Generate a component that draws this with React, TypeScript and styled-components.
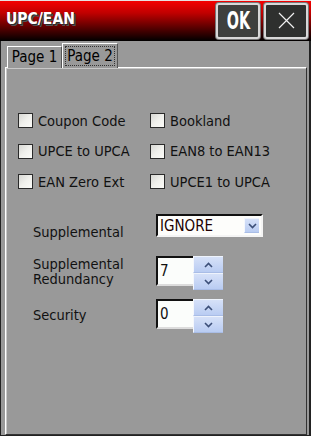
import React from "react";
import styled, { createGlobalStyle } from "styled-components";

const Global = createGlobalStyle`
  html, body { margin: 0; padding: 0; background: #999999; }
  body { font-family: "DejaVu Sans Condensed", "Liberation Sans", sans-serif; }
  #root { width: 311px; height: 436px; }
`;

const Window = styled.div`
  width: 311px;
  height: 436px;
  display: flex;
  flex-direction: column;
  background: #999999;
  overflow: hidden;
`;

const TitleBar = styled.div`
  height: 40px;
  border-top: 1px solid #e6e0e0;
  background: linear-gradient(#f40000 0%, #c00000 30%, #500000 70%, #000000 100%);
  display: flex;
  align-items: center;
  padding: 0 3px 0 6px;
  gap: 4px;
`;

const Title = styled.div`
  flex: 1;
  color: #ffffff;
  font-weight: bold;
  font-size: 15.5px;
  margin-top: -5px;
  text-shadow: 1px 1px 0 #2a2a2a, 2px 2px 0 #555;
`;

const TitleButton = styled.button<{ $dark?: boolean }>`
  width: 44px;
  height: 36px;
  margin-top: -1px;
  padding: 0;
  border: 2px solid #d8d8d8;
  border-radius: 3px;
  box-shadow: 0 0 0 1px #777;
  background: ${(p) => (p.$dark ? "#2e302e" : "#3e403e")};
  display: flex;
  align-items: center;
  justify-content: center;
  color: #ffffff;
`;

const OkText = styled.span`
  font-family: "DejaVu Sans", sans-serif;
  font-weight: bold;
  font-size: 24px;
  display: inline-block;
  transform: scaleX(0.6);
`;

const Body = styled.div`
  flex: 1;
  display: flex;
  flex-direction: column;
  border-left: 1px solid #222;
  border-right: 2px solid #222;
  border-bottom: 1px solid #222;
  padding: 2px 2px 0 4px;
`;

const TabRow = styled.div`
  display: flex;
  align-items: flex-end;
  padding-left: 2px;
  height: 25px;
  margin-bottom: -1px;
  position: relative;
  z-index: 1;
`;

const Tab = styled.div<{ $active?: boolean }>`
  box-sizing: border-box;
  height: ${(p) => (p.$active ? 25 : 22)}px;
  width: ${(p) => (p.$active ? 56 : 55)}px;
  border-top: 1px solid #ffffff;
  border-left: 1px solid #ffffff;
  border-right: 1px solid #555;
  background: #999999;
  font-size: 15px;
  color: #000;
  display: flex;
  align-items: center;
  justify-content: center;
  padding: 2px;
`;

const Focus = styled.div<{ $show?: boolean }>`
  flex: 1;
  align-self: stretch;
  display: flex;
  align-items: center;
  justify-content: center;
  border: 1px dotted ${(p) => (p.$show ? "#333" : "transparent")};
  padding-bottom: 1px;
  white-space: nowrap;
`;

const Pane = styled.div`
  flex: 1;
  border-top: 1px solid #ffffff;
  border-left: 1px solid #ffffff;
  border-right: 1px solid #333;
  border-bottom: 1px solid #333;
  box-shadow: inset 1px 1px 0 #c8c8c8;
  padding: 45px 0 0 12px;
`;

const CheckGrid = styled.div`
  display: grid;
  grid-template-columns: 132px 1fr;
  row-gap: 15.5px;
`;

const CheckItem = styled.label`
  display: flex;
  align-items: center;
  gap: 5px;
  height: 15px;
  font-size: 14.5px;
  color: #111;
  white-space: nowrap;
`;

const Box = styled.span`
  box-sizing: border-box;
  width: 15px;
  height: 15px;
  border: 1px solid #2a2a2a;
  background: linear-gradient(135deg, #d8d8d4 0%, #f0f0ec 50%, #fbfbf8 100%);
`;

const Form = styled.div`
  margin-top: 25px;
  padding-left: 15px;
  display: flex;
  flex-direction: column;
`;

const FormRow = styled.div<{ $gap: number }>`
  display: grid;
  grid-template-columns: 123px auto;
  align-items: start;
  margin-top: ${(p) => p.$gap}px;
`;

const FieldLabel = styled.div<{ $offset: number }>`
  font-size: 14.5px;
  line-height: 15px;
  color: #111;
  padding-top: ${(p) => p.$offset}px;
`;

const Select = styled.div`
  box-sizing: border-box;
  width: 107px;
  height: 23px;
  background: #fdfdfb;
  border-top: 2px solid #111;
  border-left: 2px solid #111;
  border-right: 2px solid #f4f4f4;
  border-bottom: 2px solid #f4f4f4;
  display: flex;
  align-items: center;
  padding: 0 2px;
  font-size: 15px;
  color: #200000;
`;

const SelectText = styled.span`
  flex: 1;
`;

const ArrowButton = styled.div<{ $h: number; $w: number }>`
  box-sizing: border-box;
  width: ${(p) => p.$w}px;
  height: ${(p) => p.$h}px;
  background: linear-gradient(#d6e1f8, #b9ccf2);
  border-top: 1px solid #eef3fc;
  border-left: 1px solid #f4f7fd;
  border-bottom: 1px solid #a9bde6;
  display: flex;
  align-items: center;
  justify-content: center;
`;

const Spin = styled.div`
  display: flex;
  align-items: flex-start;
`;

const SpinInput = styled.div`
  box-sizing: border-box;
  width: 37px;
  height: 30px;
  background: #fbfdfb;
  border-top: 2px solid #111;
  border-left: 2px solid #111;
  border-bottom: 2px solid #dcdcdc;
  font-size: 15px;
  color: #111;
  padding: 4px 0 0 2px;
  line-height: 18px;
`;

const SpinButtons = styled.div`
  display: flex;
  flex-direction: column;
`;

const Chevron = ({ up }: { up?: boolean }) => (
  <svg width="9" height="6" viewBox="0 0 9 6">
    <path
      d={up ? "M1 5 L4.5 1.5 L8 5" : "M1 1 L4.5 4.5 L8 1"}
      fill="none"
      stroke="#3c4f78"
      strokeWidth="1.6"
    />
  </svg>
);

const SpinBox = ({ value }: { value: string }) => (
  <Spin>
    <SpinInput>{value}</SpinInput>
    <SpinButtons>
      <ArrowButton $w={30} $h={17}>
        <Chevron up />
      </ArrowButton>
      <ArrowButton $w={30} $h={17}>
        <Chevron />
      </ArrowButton>
    </SpinButtons>
  </Spin>
);

export default function App() {
  return (
    <>
      <Global />
      <Window>
        <TitleBar>
          <Title>UPC/EAN</Title>
          <TitleButton>
            <OkText>OK</OkText>
          </TitleButton>
          <TitleButton $dark>
            <svg width="17" height="17" viewBox="0 0 17 17">
              <path d="M1 1 L16 16 M16 1 L1 16" stroke="#f0f0f0" strokeWidth="1.2" />
            </svg>
          </TitleButton>
        </TitleBar>
        <Body>
          <TabRow>
            <Tab>
              <Focus>Page 1</Focus>
            </Tab>
            <Tab $active>
              <Focus $show>Page 2</Focus>
            </Tab>
          </TabRow>
          <Pane>
            <CheckGrid>
              <CheckItem>
                <Box />
                Coupon Code
              </CheckItem>
              <CheckItem>
                <Box />
                Bookland
              </CheckItem>
              <CheckItem>
                <Box />
                UPCE to UPCA
              </CheckItem>
              <CheckItem>
                <Box />
                EAN8 to EAN13
              </CheckItem>
              <CheckItem>
                <Box />
                EAN Zero Ext
              </CheckItem>
              <CheckItem>
                <Box />
                UPCE1 to UPCA
              </CheckItem>
            </CheckGrid>
            <Form>
              <FormRow $gap={0}>
                <FieldLabel $offset={11}>Supplemental</FieldLabel>
                <Select>
                  <SelectText>IGNORE</SelectText>
                  <ArrowButton $w={15} $h={15}>
                    <Chevron />
                  </ArrowButton>
                </Select>
              </FormRow>
              <FormRow $gap={16}>
                <FieldLabel $offset={1}>Supplemental Redundancy</FieldLabel>
                <SpinBox value="7" />
              </FormRow>
              <FormRow $gap={9}>
                <FieldLabel $offset={9}>Security</FieldLabel>
                <SpinBox value="0" />
              </FormRow>
            </Form>
          </Pane>
        </Body>
      </Window>
    </>
  );
}
